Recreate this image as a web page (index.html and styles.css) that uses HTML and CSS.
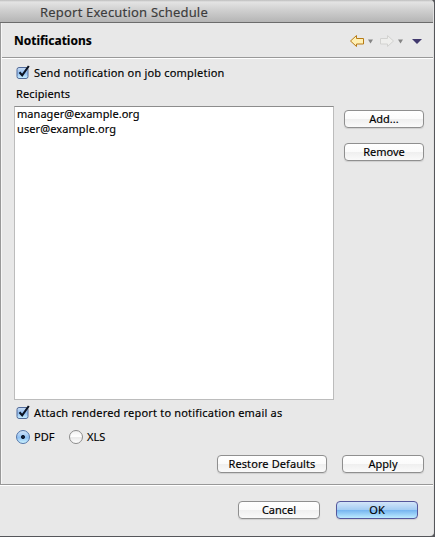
FILE: index.html
```html
<!DOCTYPE html>
<html lang="en">
<head>
<meta charset="utf-8">
<title>Report Execution Schedule</title>
<link rel="stylesheet" href="styles.css">
</head>
<body>
<div class="window">
  <header class="titlebar"><span class="t-title">Report Execution Schedule</span></header>
  <main class="panel">
    <div class="heading">
      <h1 class="t-head">Notifications</h1>
      <svg class="nav" width="76" height="14" viewBox="0 0 76 14">
        <path d="M1.500 7 L7.500 1.500 V4.500 H14.500 V10 H7.500 V12.500 Z" fill="#fff0b4" stroke="#b77b16"/>
        <path d="M19 5.500h5l-2.500 4z" fill="#858585"/>
        <path d="M44.500 7 L38.500 1.500 V4.500 H31.500 V10 H38.500 V12.500 Z" fill="#eeeeec" stroke="#d2d2d0"/>
        <path d="M49 5.500h5l-2.500 4z" fill="#858585"/>
        <path d="M63 5h10l-5 5z" fill="#41396e"/>
      </svg>
    </div>
    <div class="body">
      <div class="check-row">
        <svg class="check" width="15" height="15" viewBox="0 0 15 15"><use href="#checkbox"/></svg>
        <span class="t-send">Send notification on job completion</span>
      </div>
      <div class="label"><span class="t-rec">Recipients</span></div>
      <div class="recipients">
        <div class="list">
          <div><span class="t-mgr">manager@example.org</span></div>
          <div><span class="t-user">user@example.org</span></div>
        </div>
        <div class="actions">
          <button class="btn"><span class="t-add">Add...</span></button>
          <button class="btn"><span class="t-remove">Remove</span></button>
        </div>
      </div>
      <div class="check-row attach">
        <svg class="check" width="15" height="15" viewBox="0 0 15 15"><use href="#checkbox"/></svg>
        <span class="t-attach">Attach rendered report to notification email as</span>
      </div>
      <div class="radios">
        <i class="radio on"></i><span class="t-pdf">PDF</span>
        <i class="radio"></i><span class="t-xls">XLS</span>
      </div>
      <div class="defaults">
        <button class="btn restore"><span class="t-restore">Restore Defaults</span></button>
        <button class="btn wide"><span class="t-apply">Apply</span></button>
      </div>
    </div>
  </main>
  <footer class="footer">
    <button class="btn wide"><span class="t-cancel">Cancel</span></button>
    <button class="btn wide primary"><span class="t-ok">OK</span></button>
  </footer>
</div>
<svg class="defs" width="0" height="0">
  <defs>
    <linearGradient id="blue" x1="0" y1="0" x2="0" y2="1">
      <stop offset="0" stop-color="#c9dcf3"/><stop offset=".5" stop-color="#91bdf0"/><stop offset="1" stop-color="#c9f0ff"/>
    </linearGradient>
    <g id="checkbox">
      <rect x="1" y="2.500" width="11" height="11" rx="2" fill="url(#blue)" stroke="#526a98"/>
      <path d="M3.500 7.200 L6.200 10.400 L12.800 1" fill="none" stroke="#0b1322" stroke-width="2.100"/>
    </g>
  </defs>
</svg>
</body>
</html>
```
FILE: styles.css
```css
* { box-sizing: border-box; }
body {
  margin: 0;
  background: #55565a;
  color: #000;
  font: 11px/15px "Noto Sans", "Open Sans", sans-serif;
  -webkit-text-stroke: 0.15px currentColor;
  overflow: hidden;
}
span { white-space: nowrap; }
.defs { position: absolute; }
.window {
  width: 434px;
  height: 536px;
  display: flex;
  flex-direction: column;
  background: #e8e8e8;
  border-right: 1px solid #e0e0e0;
  border-radius: 0 4px 4px 0;
}
.titlebar {
  height: 23px;
  padding: 3px 0 0 40px;
  background: linear-gradient(#bdbdbd 0, #e4e4e4 2px, #d2d2d2 9px, #b5b5b5 22px);
  border-bottom: 1px solid #6c6c6c;
  border-radius: 0 4px 0 0;
  font-size: 13px;
  line-height: 18px;
  color: #3c3c3c;
}
.panel {
  height: 462px;
  border-left: 1px solid #989898;
  border-bottom: 1px solid #989898;
  box-shadow: inset 1px 0 #f6f6f6;
}
.heading {
  height: 36px;
  margin-left: 1px;
  padding: 0 8px 0 12px;
  display: flex;
  justify-content: space-between;
  border-bottom: 1px solid #fff;
  box-shadow: inset 0 -1px #999;
}
h1 { margin: 9px 0 0; font-size: 12px; line-height: 17px; }
.nav { margin-top: 11px; }
.body { padding: 0 9px 0 13px; }
.check-row { display: flex; height: 15px; margin-top: 6px; padding-left: 2px; }
.check { margin-right: 3px; flex: none; }
.check-row span { height: 15px; }
.label { margin: 6px 0 1px 2px; height: 19px; }
.recipients { display: flex; gap: 10px; }
.list {
  width: 320px;
  height: 294px;
  padding: 0 2px;
  background: #fff;
  border: 1px solid #bcbcbc;
  border-top-color: #8c8c8c;
}
.list div { height: 15px; line-height: 13px; }
.actions { display: flex; flex-direction: column; gap: 15px; padding-top: 4px; }
.btn {
  width: 80px;
  height: 18px;
  padding: 0;
  border: 1px solid #8f8f8f;
  border-radius: 4px;
  background: linear-gradient(#fff 0, #fbfbfb 48%, #efefef 52%, #fafafa 100%);
  box-shadow: 0 1px 1px #cfcfcf;
  color: #000;
  font: inherit;
  line-height: 15px;
  display: flex;
  justify-content: center;
}
.attach { margin-top: 5px; }
.radios { display: flex; align-items: center; height: 15px; margin: 9px 0 0 2px; }
.radio {
  width: 14px;
  height: 14px;
  flex: none;
  margin-right: 4px;
  border: 1px solid #8c8c8c;
  border-radius: 50%;
  background: linear-gradient(#f0f0f0, #fff 45%, #e9e9e9 55%, #fff);
}
.radio.on {
  border-color: #5275aa;
  background: radial-gradient(circle, #101c33 0 1.7px, transparent 2.3px), linear-gradient(#d0e2f7, #8fc0f2 55%, #ccf3ff);
}
.t-pdf { width: 35px; }
.defaults { display: flex; justify-content: flex-end; gap: 15px; margin-top: 11px; }
.restore { width: 110px; }
.wide { width: 82px; }
.footer {
  flex: 1;
  border-top: 1px solid #fff;
  display: flex;
  justify-content: flex-end;
  gap: 16px;
  padding: 15px 15px 0 0;
}
.primary {
  border-color: #55579c;
  background: linear-gradient(#d3e5f9 0, #a5cdf4 48%, #76b5f0 52%, #bdebff 100%);
}
.t-title { letter-spacing: 0.2px; }
.t-send, .t-attach { letter-spacing: 0.19px; }
.t-rec { letter-spacing: 0.12px; }
.t-mgr { letter-spacing: 0.05px; }
.t-user, .t-restore { letter-spacing: 0.1px; }
```
